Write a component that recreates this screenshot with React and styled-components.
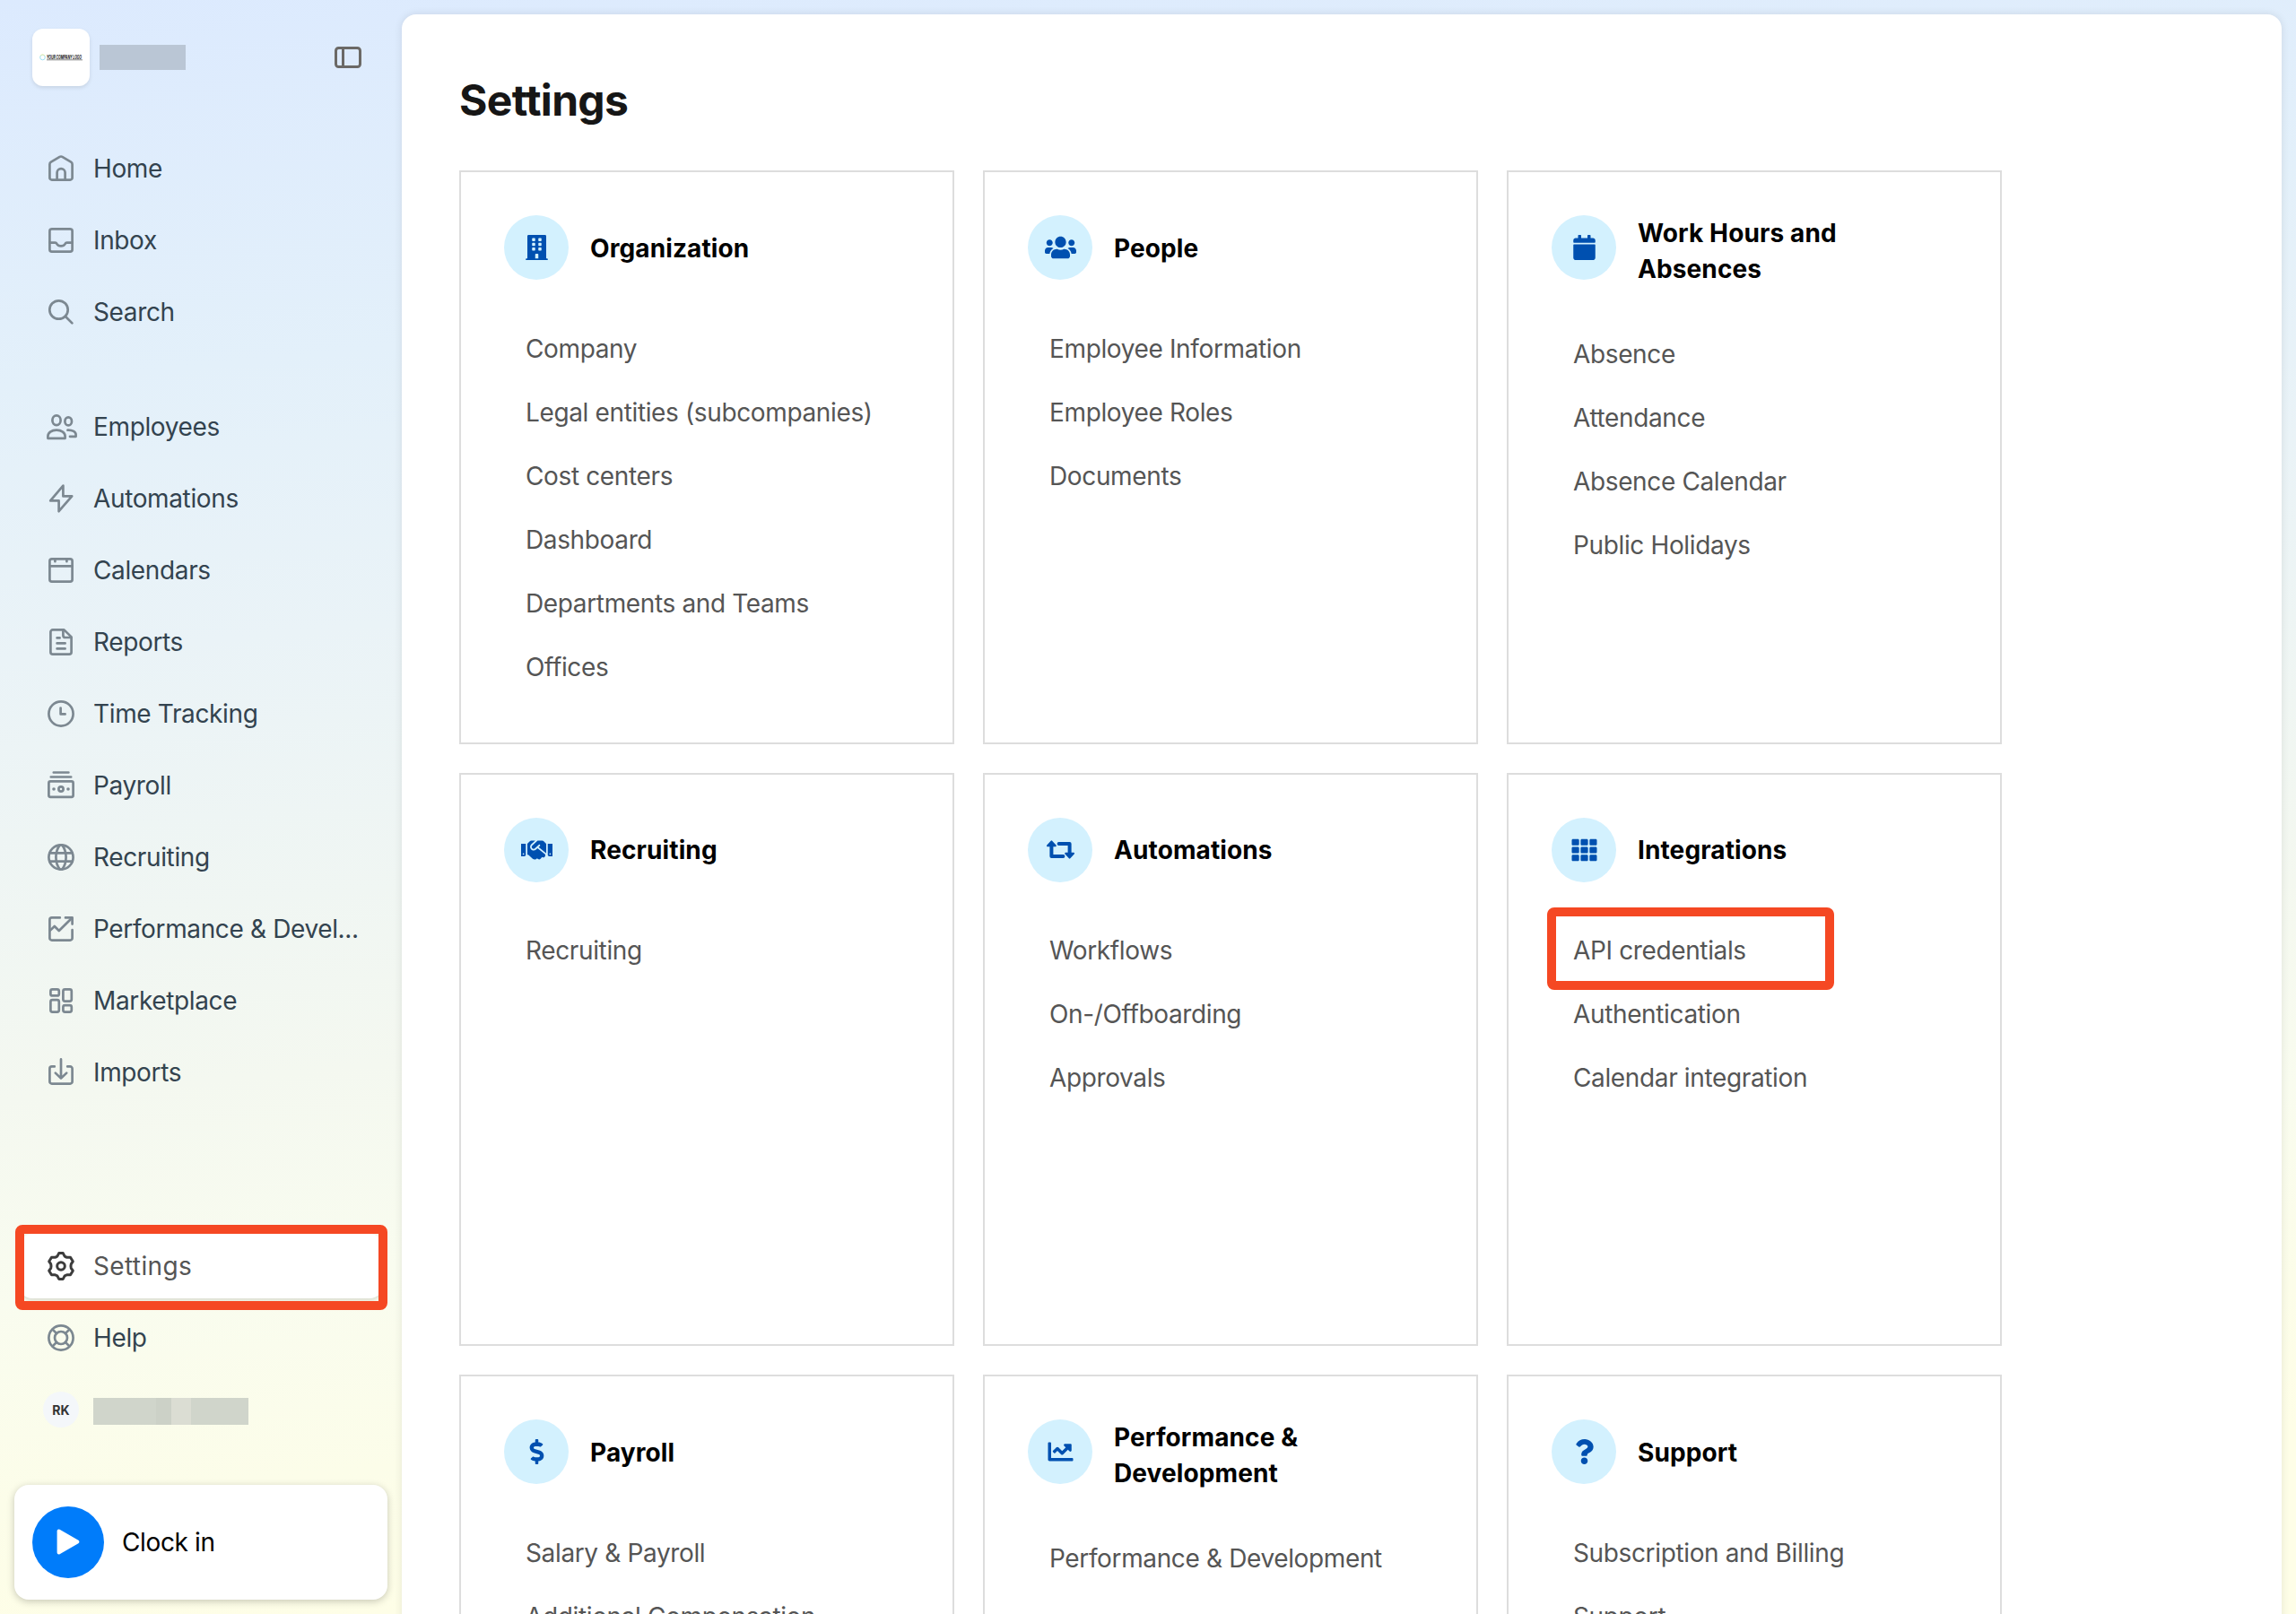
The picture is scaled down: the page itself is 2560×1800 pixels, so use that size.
import React from 'react';
import styled, { createGlobalStyle, css } from 'styled-components';
import {
  FaBuilding,
  FaCalendar,
  FaChartLine,
  FaDollarSign,
  FaHandshake,
  FaQuestion,
  FaTh,
  FaUsers,
} from 'react-icons/fa';

const GlobalStyle = createGlobalStyle`
  * {
    box-sizing: border-box;
  }
  body {
    margin: 0;
    font-family: Inter, 'Liberation Sans', sans-serif;
    font-size: 28px;
    letter-spacing: -0.013em;
    overflow: hidden;
  }
`;

const Page = styled.div`
  display: flex;
  height: 1800px;
  padding: 16px 16px 0 0;
  overflow: hidden;
  background: linear-gradient(
    174.5deg,
    #dceafe 0%,
    #e3f0fa 21%,
    #eaf3f7 36%,
    #f4f8f0 60%,
    #f9fcef 71%,
    #fcfde9 82%,
    #fefee7 90%
  );
`;

const Sidebar = styled.aside`
  display: flex;
  flex-direction: column;
  flex: none;
  width: 448px;
  padding: 16px 16px;
`;

const CompanyBar = styled.div`
  display: flex;
  align-items: center;
  height: 64px;
  padding: 0 29px 0 20px;

  .toggle {
    margin-left: auto;
  }
`;

const Logo = styled.div`
  display: flex;
  align-items: center;
  justify-content: center;
  width: 64px;
  height: 64px;
  margin-right: 11px;
  border-radius: 12px;
  background: #fff;
  box-shadow: 0 2px 4px rgba(0, 0, 0, 0.1);
`;

const Redacted = styled.span`
  display: flex;
  width: ${props => props.width}px;
  height: ${props => props.height}px;
  margin-top: ${props => props.top || 0}px;
  background: ${props => props.color};
`;

const RedactedPart = styled.i`
  width: ${props => props.width}px;
  margin-left: ${props => props.offset || 0}px;
  background: ${props => props.color};
`;

const Nav = styled.nav`
  display: flex;
  flex-direction: column;
  gap: 8px;
  padding: 0 4px;
  margin-top: ${props => props.top}px;
`;

const NavItem = styled.a`
  position: relative;
  display: flex;
  align-items: center;
  gap: 20px;
  height: 72px;
  padding: 0 20px 0 32px;
  border-radius: 16px;
  color: #33434f;
  white-space: nowrap;

  svg {
    flex: none;
    color: #7c8891;
  }

  ${props => props.$active && css`
    color: #555;
    background: #fff;
    letter-spacing: 0.013em;
    box-shadow: 0 2px 4px rgba(0, 0, 0, 0.14);
    svg {
      color: #3c3c3c;
    }
  `}
`;

const Highlight = styled.span`
  position: absolute;
  top: ${props => props.top}px;
  left: ${props => props.left}px;
  width: ${props => props.width}px;
  height: ${props => props.height}px;
  border: 10px solid #f54823;
  border-radius: 8px;
  pointer-events: none;
`;

const Avatar = styled.span`
  display: flex;
  align-items: center;
  justify-content: center;
  flex: none;
  width: 40px;
  height: 40px;
  margin: 0 -4px;
  border-radius: 50%;
  background: #f4f7fa;
  color: #333;
  font-size: 14px;
  font-weight: 700;
  letter-spacing: 0;
`;

const ClockCard = styled.div`
  display: flex;
  align-items: center;
  gap: 20px;
  height: 128px;
  margin-top: 48px;
  padding: 0 20px;
  border-radius: 16px;
  background: #fff;
  color: #000;
  box-shadow: 0 2px 8px rgba(0, 0, 0, 0.22);
`;

const PlayButton = styled.div`
  display: flex;
  align-items: center;
  justify-content: center;
  width: 80px;
  height: 80px;
  border-radius: 50%;
  background: #007cfa;
`;

const Main = styled.main`
  flex: 1;
  height: 1800px;
  padding: 64px;
  border-radius: 16px 16px 0 0;
  background: #fff;
  box-shadow: 0 0 10px rgba(0, 0, 0, 0.1);
`;

const Title = styled.h1`
  margin: 0 0 46px;
  color: #161616;
  font-size: 48px;
  font-weight: 700;
  line-height: 64px;
  letter-spacing: -0.014em;
`;

const CardGrid = styled.div`
  display: grid;
  grid-template-columns: repeat(3, 552px);
  grid-auto-rows: 639.6px;
  gap: 32px;
`;

const Card = styled.section`
  padding: 48px;
  border: 2px solid #ddd;
`;

const CardHeader = styled.header`
  display: flex;
  gap: 24px;
  min-height: 73.5px;
  margin-bottom: 40px;

  h2 {
    align-self: center;
    margin: 0;
    max-width: 280px;
    color: #000;
    font-size: 28px;
    font-weight: 700;
    line-height: 40px;
    letter-spacing: 0.004em;
  }
`;

const CardIcon = styled.div`
  display: flex;
  align-items: center;
  justify-content: center;
  flex: none;
  width: 72px;
  height: 72px;
  border-radius: 50%;
  background: #d3f1fe;
  color: #0050b0;

  svg {
    width: 35px;
    height: 28px;
  }
`;

const CardLinks = styled.ul`
  margin: 0;
  padding: 0 24px;
  list-style: none;
`;

const CardLink = styled.li`
  position: relative;
  height: 71.1px;
  line-height: 71.1px;
  color: #555;
  white-space: nowrap;
`;

const Icon = ({ children, ...rest }) => (
  <svg
    width="32"
    height="32"
    viewBox="0 0 32 32"
    fill="none"
    stroke="currentColor"
    strokeWidth="2.7"
    strokeLinecap="round"
    strokeLinejoin="round"
    overflow="visible"
    {...rest}
  >
    {children}
  </svg>
);

const HomeIcon = () => (
  <Icon>
    <path d="M3.4 11.2C3.4 10 3.9 9.3 4.9 8.7L14.6 2.9Q16 2.1 17.4 2.9L27.1 8.7C28.1 9.3 28.6 10 28.6 11.2V26.2A2.4 2.4 0 0 1 26.2 28.6H5.8A2.4 2.4 0 0 1 3.4 26.2Z" />
    <path d="M11.6 28.6V20.6A4.5 4.5 0 0 1 20.6 20.6V28.6" />
  </Icon>
);

const InboxIcon = () => (
  <Icon>
    <rect x="3.4" y="3.4" width="25.2" height="25.2" rx="2.4" />
    <path d="M3.4 18.6H9.5C10.6 18.6 11 19.2 11.5 20.2C12.3 21.6 13.8 22.4 16 22.4C18.2 22.4 19.7 21.6 20.5 20.2C21 19.2 21.4 18.6 22.5 18.6H28.6" />
  </Icon>
);

const SearchIcon = () => (
  <Icon>
    <circle cx="13.5" cy="13.5" r="10.2" />
    <path d="M20.8 20.8L28.4 28.4" />
  </Icon>
);

const EmployeesIcon = () => (
  <Icon>
    <ellipse cx="11" cy="8.8" rx="4.6" ry="5.4" />
    <ellipse cx="24.2" cy="9.9" rx="3.8" ry="4.5" />
    <path d="M1.4 28.8H20.6V26.6C20.6 22.6 16.6 19.6 11 19.6S1.4 22.6 1.4 26.6Z" />
    <path d="M23.4 19.6C28.8 19.4 32.6 21.6 32.6 24.8V26.8H26" />
  </Icon>
);

const BoltIcon = () => (
  <Icon>
    <path d="M18.4 1.6V13.4H28.2L13.6 30.2V18.4H4.2Z" />
  </Icon>
);

const CalendarsIcon = () => (
  <Icon>
    <rect x="3.4" y="3.4" width="25.2" height="25.2" rx="2.4" />
    <path d="M3.4 11.4H28.6M9.4 3.8V6.2M22.4 3.8V6.2" />
  </Icon>
);

const ReportsIcon = () => (
  <Icon>
    <path d="M6.8 2.4H19.4L27.6 10.4V27.2A2.4 2.4 0 0 1 25.2 29.6H6.8A2.4 2.4 0 0 1 4.4 27.2V4.8A2.4 2.4 0 0 1 6.8 2.4Z" />
    <path d="M18.4 2.8V8.4A2.6 2.6 0 0 0 21 11H27" />
    <path d="M11.6 11.4H14.6M11.6 17.4H20.6M11.6 23.4H20.6" />
  </Icon>
);

const ClockIcon = () => (
  <Icon>
    <circle cx="16" cy="16" r="13.6" />
    <path d="M15.6 9.6V16.4H20.6" />
  </Icon>
);

const PayrollIcon = () => (
  <Icon>
    <path d="M7.8 1.5H24.4M4.8 6.5H27.2" />
    <rect x="2.4" y="11.4" width="27.2" height="17.4" rx="1.8" />
    <circle cx="16" cy="20" r="2.6" />
    <circle cx="8" cy="20" r="1.8" fill="currentColor" stroke="none" />
    <circle cx="24" cy="20" r="1.8" fill="currentColor" stroke="none" />
  </Icon>
);

const GlobeIcon = () => (
  <Icon>
    <circle cx="16" cy="16" r="13.6" />
    <path d="M3.4 11.4H28.6M3.4 20.6H28.6" />
    <path d="M14.6 2.6C9 10 9 22 14.6 29.4M17.4 2.6C23 10 23 22 17.4 29.4" />
  </Icon>
);

const PerformanceIcon = () => (
  <Icon>
    <path d="M14.8 3.4H5.8A2.4 2.4 0 0 0 3.4 5.8V26.2A2.4 2.4 0 0 0 5.8 28.6H26.2A2.4 2.4 0 0 0 28.6 26.2V17.2" />
    <path d="M21 3.4H28.6V10.6" />
    <path d="M4 17.6L8.8 13L13.8 18L28 4" />
  </Icon>
);

const MarketplaceIcon = () => (
  <Icon>
    <rect x="4.4" y="3.4" width="9.4" height="7" rx="2" />
    <rect x="18.4" y="3.4" width="9.4" height="13.2" rx="2" />
    <rect x="4.4" y="15.2" width="9.4" height="13.4" rx="2" />
    <rect x="18.4" y="21.2" width="9.4" height="7.4" rx="2" />
  </Icon>
);

const ImportsIcon = () => (
  <Icon>
    <path d="M8.8 9.4H5.8A2.4 2.4 0 0 0 3.4 11.8V26.2A2.4 2.4 0 0 0 5.8 28.6H26.2A2.4 2.4 0 0 0 28.6 26.2V11.8A2.4 2.4 0 0 0 26.2 9.4H23.2" />
    <path d="M16 1.4V22.4M9.8 16.6L16 22.6L22.2 16.6" />
  </Icon>
);

const GearIcon = () => (
  <Icon strokeWidth="3">
    <path d="M13.7 1.6H18.3L20 4.9Q22 6.2 22.9 6.3L26.5 6.2L29.3 10.8L27.3 13.7Q26.6 16 27.3 18.3L29.3 21.2L26.5 25.8L22.9 25.7Q22 25.8 20 27.1L18.3 30.4H13.7L12 27.1Q10 25.8 9.1 25.7L5.5 25.8L2.7 21.2L4.7 18.3Q5.4 16 4.7 13.7L2.7 10.8L5.5 6.2L9.1 6.3Q10 6.2 12 4.9Z" />
    <circle cx="16" cy="16" r="4.3" />
  </Icon>
);

const HelpIcon = () => (
  <Icon>
    <circle cx="16" cy="16" r="13.6" />
    <circle cx="16" cy="16" r="7" />
    <path d="M6.6 6.6L11 11M25.4 6.6L21 11M6.6 25.4L11 21M25.4 25.4L21 21" />
  </Icon>
);

// two bent arrows, up on the left and down on the right
const LoopIcon = () => (
  <svg viewBox="0 0 35 28" fill="none" stroke="currentColor" strokeWidth="4" strokeLinejoin="round" strokeLinecap="round">
    <path d="M7.4 8V21H20.4M15.6 7H27.6V19" />
    <path d="M7.4 4.4L3 9.2H11.8ZM27.6 22.6L23.2 17.8H32Z" fill="currentColor" strokeWidth="2" />
  </svg>
);

const CompanyLogo = () => (
  <svg width="50" height="16" viewBox="0 0 50 16" overflow="visible">
    <circle cx="4.5" cy="8" r="2.8" fill="none" stroke="#9fe0f2" strokeWidth="1" />
    <path d="M2 6.4A2.8 2.8 0 0 1 7 6.4" fill="none" stroke="#eef0a8" strokeWidth="1" />
    <text
      x="9"
      y="10"
      textLength="39"
      lengthAdjust="spacingAndGlyphs"
      letterSpacing="0"
      fontSize="5.5"
      fontWeight="700"
      fontStyle="italic"
      fill="#111"
    >
      YOUR COMPANY LOGO
    </text>
    <path d="M9 10.8H49" stroke="#555" strokeWidth="0.7" />
  </svg>
);

const ToggleIcon = () => (
  <svg className="toggle" width="30" height="24" viewBox="0 0 30 24" fill="none" stroke="#6b6966" strokeWidth="3">
    <rect x="1.5" y="1.5" width="27" height="21" rx="3" />
    <path d="M9.5 1.5V22.5" />
  </svg>
);

const mainItems = [
  { label: 'Home', icon: HomeIcon },
  { label: 'Inbox', icon: InboxIcon },
  { label: 'Search', icon: SearchIcon },
];

const appItems = [
  { label: 'Employees', icon: EmployeesIcon },
  { label: 'Automations', icon: BoltIcon },
  { label: 'Calendars', icon: CalendarsIcon },
  { label: 'Reports', icon: ReportsIcon },
  { label: 'Time Tracking', icon: ClockIcon },
  { label: 'Payroll', icon: PayrollIcon },
  { label: 'Recruiting', icon: GlobeIcon },
  { label: 'Performance & Devel...', icon: PerformanceIcon },
  { label: 'Marketplace', icon: MarketplaceIcon },
  { label: 'Imports', icon: ImportsIcon },
];

const cards = [
  {
    title: 'Organization',
    icon: FaBuilding,
    links: ['Company', 'Legal entities (subcompanies)', 'Cost centers', 'Dashboard', 'Departments and Teams', 'Offices'],
  },
  { title: 'People', icon: FaUsers, links: ['Employee Information', 'Employee Roles', 'Documents'] },
  {
    title: 'Work Hours and Absences',
    icon: FaCalendar,
    links: ['Absence', 'Attendance', 'Absence Calendar', 'Public Holidays'],
  },
  { title: 'Recruiting', icon: FaHandshake, links: ['Recruiting'] },
  { title: 'Automations', icon: LoopIcon, links: ['Workflows', 'On-/Offboarding', 'Approvals'] },
  {
    title: 'Integrations',
    icon: FaTh,
    links: ['API credentials', 'Authentication', 'Calendar integration'],
    highlighted: 'API credentials',
  },
  { title: 'Payroll', icon: FaDollarSign, links: ['Salary & Payroll', 'Additional Compensation'] },
  { title: 'Performance & Development', icon: FaChartLine, links: ['Performance & Development'] },
  { title: 'Support', icon: FaQuestion, links: ['Subscription and Billing', 'Support'] },
];

const NavList = ({ items, top }) => (
  <Nav top={top}>
    {items.map(({ label, icon: ItemIcon }) => (
      <NavItem key={label}>
        <ItemIcon />
        <span>{label}</span>
      </NavItem>
    ))}
  </Nav>
);

const SettingsCard = ({ title, icon: TitleIcon, links, highlighted }) => (
  <Card>
    <CardHeader>
      <CardIcon><TitleIcon /></CardIcon>
      <h2>{title}</h2>
    </CardHeader>
    <CardLinks>
      {links.map((link) => (
        <CardLink key={link}>
          {link}
          {link === highlighted && <Highlight top={-13} left={-29} width={320} height={92} />}
        </CardLink>
      ))}
    </CardLinks>
  </Card>
);

function App() {
  return (
    <Page>
      <GlobalStyle />
      <Sidebar>
        <CompanyBar>
          <Logo><CompanyLogo /></Logo>
          <Redacted width={96} height={28} color="#bac6d5" />
          <ToggleIcon />
        </CompanyBar>
        <NavList items={mainItems} top={56} />
        <NavList items={appItems} top={56} />
        <Nav top={144}>
          <NavItem $active>
            <GearIcon />
            <span>Settings</span>
            <Highlight top={-10} left={-3} width={415} height={95} />
          </NavItem>
          <NavItem>
            <HelpIcon />
            <span>Help</span>
          </NavItem>
          <NavItem>
            <Avatar>RK</Avatar>
            <Redacted width={173} height={30} top={4} color="#d0d5cb">
              <RedactedPart width={17} offset={70} color="#ccd1c7" />
              <RedactedPart width={22} color="#dbddd3" />
            </Redacted>
          </NavItem>
        </Nav>
        <ClockCard>
          <PlayButton>
            <svg width="28" height="32" viewBox="0 0 28 32" fill="#fff" stroke="#fff" strokeWidth="4" strokeLinejoin="round">
              <path d="M3.6 3.6V27.6L24.4 15.6Z" />
            </svg>
          </PlayButton>
          Clock in
        </ClockCard>
      </Sidebar>
      <Main>
        <Title>Settings</Title>
        <CardGrid>
          {cards.map((card) => (
            <SettingsCard key={card.title} {...card} />
          ))}
        </CardGrid>
      </Main>
    </Page>
  );
}

export default App;
